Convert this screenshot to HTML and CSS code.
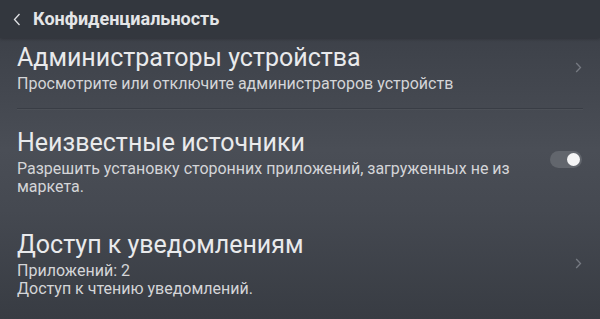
FILE: index.html
```html
<!DOCTYPE html>
<html lang="ru">
<head>
<meta charset="utf-8">
<link rel="stylesheet" href="styles.css">
</head>
<body>
<div class="screen">
  <header class="topbar">
    <svg class="back" width="8" height="13" viewBox="0 0 8 13"><path d="M6.5 1 L1.5 6.5 L6.5 12" fill="none" stroke="#e0e1e4" stroke-width="1.3"/></svg>
    <span class="topbar-title">Конфиденциальность</span>
  </header>
  <main class="list">
    <div class="item item-admin">
      <div class="text">
        <div class="title">Администраторы устройства</div>
        <div class="sub">Просмотрите или отключите администраторов устройств</div>
      </div>
      <svg class="chev" width="7" height="11" viewBox="0 0 7 11"><path d="M1.2 1 L5.5 5.5 L1.2 10" fill="none" stroke="#767a82" stroke-width="1.3"/></svg>
    </div>
    <div class="item item-unknown">
      <div class="text">
        <div class="title">Неизвестные источники</div>
        <div class="sub">Разрешить установку сторонних приложений, загруженных не из маркета.</div>
      </div>
      <div class="toggle"><span class="knob"></span></div>
    </div>
    <div class="item item-notif">
      <div class="text">
        <div class="title">Доступ к уведомлениям</div>
        <div class="sub">Приложений: 2</div>
        <div class="sub sub-next">Доступ к чтению уведомлений.</div>
      </div>
      <svg class="chev" width="7" height="11" viewBox="0 0 7 11"><path d="M1.2 1 L5.5 5.5 L1.2 10" fill="none" stroke="#767a82" stroke-width="1.3"/></svg>
    </div>
  </main>
</div>
</body>
</html>
```
FILE: styles.css
```css
* { box-sizing: border-box; }
html, body { margin: 0; padding: 0; }
body {
  width: 600px;
  height: 319px;
  overflow: hidden;
  font-family: Roboto, "Noto Sans", sans-serif;
  background: #3c4048;
}
.screen {
  width: 600px;
  height: 319px;
  display: flex;
  flex-direction: column;
  background: linear-gradient(180deg, #393d45 0px, #42464e 80px, #4a4e56 150px, #454951 210px, #383c43 319px);
}
.topbar {
  height: 38px;
  flex: none;
  display: flex;
  align-items: center;
  padding-left: 13px;
  gap: 12px;
  background: #33373e;
  box-shadow: 0 1px 3px rgba(0,0,0,0.25);
  position: relative;
  z-index: 1;
}
.back { display: block; margin-top: 1px; }
.topbar-title {
  color: #e4e5e7;
  font-weight: bold;
  font-size: 18px;
  line-height: 22px;
}
.list { display: flex; flex-direction: column; }
.item {
  display: flex;
  align-items: center;
  gap: 12px;
  padding: 0 18px 0 17px;
}
.text { flex: 1; min-width: 0; }
.title {
  color: #e9eaec;
  font-size: 25px;
  line-height: 30px;
}
.sub {
  color: #d4d5d8;
  font-size: 16px;
  line-height: 17.5px;
  margin-top: 2px;
}
.sub-next { margin-top: 0.5px; }
.item-admin {
  padding-top: 4.5px;
  padding-bottom: 15.5px;
  margin: 0 17px;
  padding-left: 0;
  padding-right: 1px;
  border-bottom: 1px solid #393d45;
  box-shadow: 0 1px 0 rgba(255,255,255,0.04);
}
.item-unknown {
  padding-top: 19.5px;
}
.item-unknown .text { flex: none; width: 505px; margin-right: auto; }
.item-notif { padding-top: 35px; }
.chev { display: block; flex: none; }
.toggle {
  width: 32px;
  height: 17px;
  border-radius: 9px;
  background: #62666d;
  position: relative;
  flex: none;
  margin-top: -4px;
}
.knob {
  position: absolute;
  right: 2px;
  top: 2px;
  width: 13px;
  height: 13px;
  border-radius: 50%;
  background: #f4f4f5;
}
```
